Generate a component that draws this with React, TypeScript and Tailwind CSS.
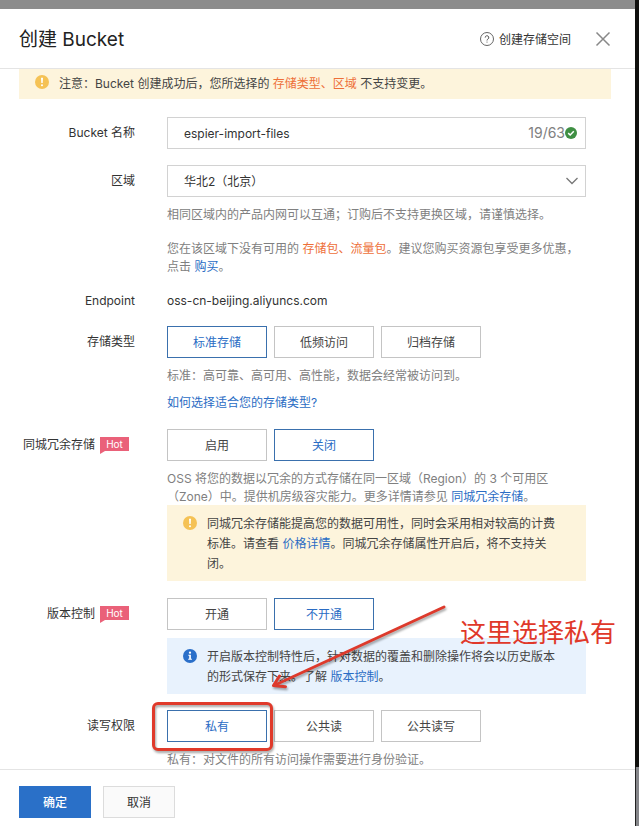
import { useState, type ReactNode } from "react";

const fontCls = "font-['Inter','Noto_Sans_CJK_SC',sans-serif]";
const linkCls = "text-[#2a6cc4] hover:underline";

const STORAGE_CLASSES = ["标准存储", "低频访问", "归档存储"];
const REDUNDANCY = ["启用", "关闭"];
const VERSIONING = ["开通", "不开通"];
const ACL = ["私有", "公共读", "公共读写"];

const NOTICE_STYLES = {
  warning: "bg-[#fdf4dc]",
  info: "bg-[#e8f2fd]",
};

function WarningIcon() {
  return (
    <svg viewBox="0 0 14 14" className="size-3.5 shrink-0" aria-hidden="true">
      <circle cx="7" cy="7" r="7" fill="#f5c255" />
      <path d="M6 2.8h2l-.3 5.2H6.300z" fill="#fff" />
      <circle cx="7" cy="10.200" r="1.050" fill="#fff" />
    </svg>
  );
}

function InfoIcon() {
  return (
    <svg viewBox="0 0 14 14" className="size-3.5 shrink-0" aria-hidden="true">
      <circle cx="7" cy="7" r="7" fill="#2a6fc9" />
      <circle cx="7" cy="3.700" r="1.150" fill="#fff" />
      <path d="M5.300 5.800h2.600v4h1v1H5.200v-1h1V6.800h-.9z" fill="#fff" />
    </svg>
  );
}

function CheckIcon() {
  return (
    <svg viewBox="0 0 12 12" className="size-3 shrink-0" aria-hidden="true">
      <circle cx="6" cy="6" r="6" fill="#3f8f43" />
      <path d="M3.200 6.100l2 1.900 3.600-3.700" fill="none" stroke="#fff" strokeWidth="1.500" />
    </svg>
  );
}

function HelpIcon() {
  return (
    <svg viewBox="0 0 14 14" className="size-3.5 shrink-0" fill="none" stroke="#555" aria-hidden="true">
      <circle cx="7" cy="7" r="6.500" strokeWidth="0.900" />
      <path d="M5.200 5.600a1.800 1.800 0 1 1 2.700 1.500c-.6.4-.9.700-.9 1.400" strokeWidth="1" />
      <circle cx="7" cy="10" r="0.600" fill="#555" stroke="none" />
    </svg>
  );
}

function HotTag() {
  return (
    <span className="relative mr-1.5 ml-[5px] h-3.5 w-[29px] bg-[#ea6179] text-center text-[10px] leading-[15px] text-white">
      Hot
      <svg viewBox="0 0 5 3" className="absolute top-full left-0 h-[3px] w-[5px]" aria-hidden="true">
        <path d="M0 0h5L0 3z" fill="#ea6179" />
      </svg>
    </span>
  );
}

function Row({ label, htmlFor, id, hot, className, children }: {
  label: string; htmlFor?: string; id?: string; hot?: boolean; className: string; children: ReactNode;
}) {
  return (
    <div className={`flex gap-8 ${className}`}>
      <div className="flex h-[30px] w-[116px] shrink-0 items-center justify-end text-[#333]">
        {htmlFor ? <label htmlFor={htmlFor} className="pt-0.5">{label}</label> : <span id={id} className="pt-0.5">{label}</span>}
        {hot && <HotTag />}
      </div>
      <div className="min-w-0 flex-1">{children}</div>
    </div>
  );
}

function Choices({ options, value, onChange, labelledBy }: {
  options: string[]; value: string; onChange: (v: string) => void; labelledBy: string;
}) {
  return (
    <div role="group" aria-labelledby={labelledBy} className="flex gap-[7px]">
      {options.map((o) => (
        <button key={o} type="button" aria-pressed={o === value} onClick={() => onChange(o)}
          className={`h-8 w-[100px] border bg-white pt-0.5 ${
            o === value ? "border-[#3a70ad] text-[#2a6cc4]" : "border-[#c4c4c4] text-[#444]"}`}>
          {o}
        </button>
      ))}
    </div>
  );
}

function Notice({ kind, children }: { kind: "warning" | "info"; children: ReactNode }) {
  return (
    <div className={`flex gap-2.5 pt-[9px] pr-6 pb-[7px] pl-4 ${NOTICE_STYLES[kind]}`}>
      <span className="pt-[2px]">{kind === "warning" ? <WarningIcon /> : <InfoIcon />}</span>
      <p className="leading-5 text-[#444]">{children}</p>
    </div>
  );
}

// Hand-drawn style callout pointing at the first ACL option
function Callout() {
  return (
    <div className="pointer-events-none">
      <div className="absolute -top-2 -left-[15px] h-[49px] w-[121px] rounded-md border-3 border-[#e03a2b] drop-shadow-[1px_2px_1px_rgba(0,0,0,0.35)]" />
      <svg viewBox="0 0 184 92" fill="none" stroke="#dd3a2c" strokeLinecap="round" strokeLinejoin="round"
        className="absolute -top-[108px] left-[100px] h-[92px] w-[184px] drop-shadow-[1px_2px_1px_rgba(0,0,0,0.35)]" aria-hidden="true">
        <path d="M177 5L8 83" strokeWidth="3" />
        <path d="M12.500 74L6.500 83.500l12 1.200" strokeWidth="3" />
      </svg>
      <p className="absolute -top-[97px] left-[293px] text-[26px] leading-[40px] whitespace-nowrap text-[#e0382a]">
        这里选择私有
      </p>
    </div>
  );
}

export default function CreateBucketPage() {
  const [name, setName] = useState("espier-import-files");
  const [storage, setStorage] = useState("标准存储");
  const [redundancy, setRedundancy] = useState("关闭");
  const [versioning, setVersioning] = useState("不开通");
  const [acl, setAcl] = useState("私有");

  return (
    <div lang="zh-CN" className={`flex min-h-screen flex-col text-xs ${fontCls}`}>
      <div className="flex flex-1">
        <div className="flex min-w-0 flex-1 flex-col bg-white">
          <div className="h-[9px] bg-[#8c8c8c]" />

          {/* Header */}
          <header className="flex h-[60px] items-center border-b border-[#e4e4e4] pr-6 pl-[19px]">
            <h1 className="flex-1 pt-0.5 text-[19px] text-[#222]">创建 Bucket</h1>
            <a href="#help" className="flex items-center gap-[5px] text-[#333]">
              <HelpIcon />
              <span className="pt-0.5">创建存储空间</span>
            </a>
            <button type="button" aria-label="关闭" className="ml-6">
              <svg viewBox="0 0 16 16" className="size-4" stroke="#888" strokeWidth="1.500" aria-hidden="true">
                <path d="M1.500 1.500l13 13M14.500 1.500l-13 13" />
              </svg>
            </button>
          </header>

          {/* Form */}
          <main className="flex-1 pr-6 pl-[19px] leading-[18px] text-[#808080]">
            <div className="flex gap-2.5 bg-[#fdf4dc] py-[5px] pl-4 leading-5 text-[#444]">
              <span className="pt-px"><WarningIcon /></span>
              <p>
                注意：Bucket 创建成功后，您所选择的 <span className="text-[#ee6f38]">存储类型、区域</span> 不支持变更。
              </p>
            </div>

            <div className="pr-[25px]">
              <Row label="Bucket 名称" htmlFor="bucket-name" className="mt-[18px]">
                <div className="flex h-8 items-center border border-[#d2d2d2] pr-2 pl-4">
                  <input id="bucket-name" value={name} maxLength={63} onChange={(e) => setName(e.target.value)}
                    className="min-w-0 flex-1 pt-0.5 text-[#333] outline-none" />
                  <span className="text-sm text-[#808080]">{name.length}/63</span>
                  <CheckIcon />
                </div>
              </Row>

              <Row label="区域" htmlFor="region" className="mt-4">
                <div className="relative">
                  <select id="region" className="h-8 w-full appearance-none border border-[#d2d2d2] bg-white pt-0.5 pl-4 text-[#333]">
                    <option>华北2（北京）</option>
                  </select>
                  <svg viewBox="0 0 12 8" className="pointer-events-none absolute top-3 right-2 h-2 w-3" fill="none" stroke="#777" strokeWidth="1.300" aria-hidden="true">
                    <path d="M0.500 1L6 6.500 11.500 1" />
                  </svg>
                </div>
                <p className="mt-[9px]">相同区域内的产品内网可以互通；订购后不支持更换区域，请谨慎选择。</p>
                <p className="mt-4">
                  您在该区域下没有可用的 <span className="text-[#ee6f38]">存储包、流量包</span>。建议您购买资源包享受更多优惠，点击 <a href="#buy" className={linkCls}>购买</a>。
                </p>
              </Row>

              <div className="mt-[15px] flex gap-8 leading-5 text-[#333]">
                <span className="w-[116px] text-right">Endpoint</span>
                <span>oss-cn-beijing.aliyuncs.com</span>
              </div>

              <Row label="存储类型" id="storage" className="mt-[15px]">
                <Choices options={STORAGE_CLASSES} value={storage} onChange={setStorage} labelledBy="storage" />
                <p className="mt-[9px]">标准：高可靠、高可用、高性能，数据会经常被访问到。</p>
                <p className="mt-[9px]">
                  <a href="#storage-guide" className={linkCls}>如何选择适合您的存储类型?</a>
                </p>
              </Row>

              <Row label="同城冗余存储" id="redundancy" hot className="mt-[17px]">
                <Choices options={REDUNDANCY} value={redundancy} onChange={setRedundancy} labelledBy="redundancy" />
                <p className="mt-[9px] -mb-px">
                  OSS 将您的数据以冗余的方式存储在同一区域（Region）的 3 个可用区（Zone）中。提供机房级容灾能力。更多详情请参见 <a href="#zrs" className={linkCls}>同城冗余存储</a>。
                </p>
                <Notice kind="warning">
                  同城冗余存储能提高您的数据可用性，同时会采用相对较高的计费标准。请查看 <a href="#pricing" className={linkCls}>价格详情</a>。同城冗余存储属性开启后，将不支持关闭。
                </Notice>
              </Row>

              <Row label="版本控制" id="versioning" hot className="mt-[17px]">
                <Choices options={VERSIONING} value={versioning} onChange={setVersioning} labelledBy="versioning" />
                <div className="mt-2">
                  <Notice kind="info">
                    开启版本控制特性后，针对数据的覆盖和删除操作将会以历史版本的形式保存下来。了解 <a href="#versioning-guide" className={linkCls}>版本控制</a>。
                  </Notice>
                </div>
              </Row>

              <Row label="读写权限" id="acl" className="mt-4">
                <div className="relative">
                  <Choices options={ACL} value={acl} onChange={setAcl} labelledBy="acl" />
                  <Callout />
                </div>
                <p className="mt-[9px]">私有：对文件的所有访问操作需要进行身份验证。</p>
              </Row>
            </div>
          </main>

          <footer className="flex gap-3 border-t border-[#e4e4e4] pt-4 pb-2 pl-[19px]">
            <button type="button" className="h-8 w-[72px] bg-[#2a70c8] pt-0.5 font-medium text-white">确定</button>
            <button type="button" className="h-8 w-[72px] border border-[#dcdcdc] bg-[#fafafa] pt-0.5 text-[#333]">取消</button>
          </footer>
        </div>

        {/* Page behind the drawer */}
        <div className="flex w-1 flex-col bg-[#10100e]">
          <div className="mt-auto h-[59px] border-l border-[#222] bg-[#85868a]" />
        </div>
      </div>
    </div>
  );
}
